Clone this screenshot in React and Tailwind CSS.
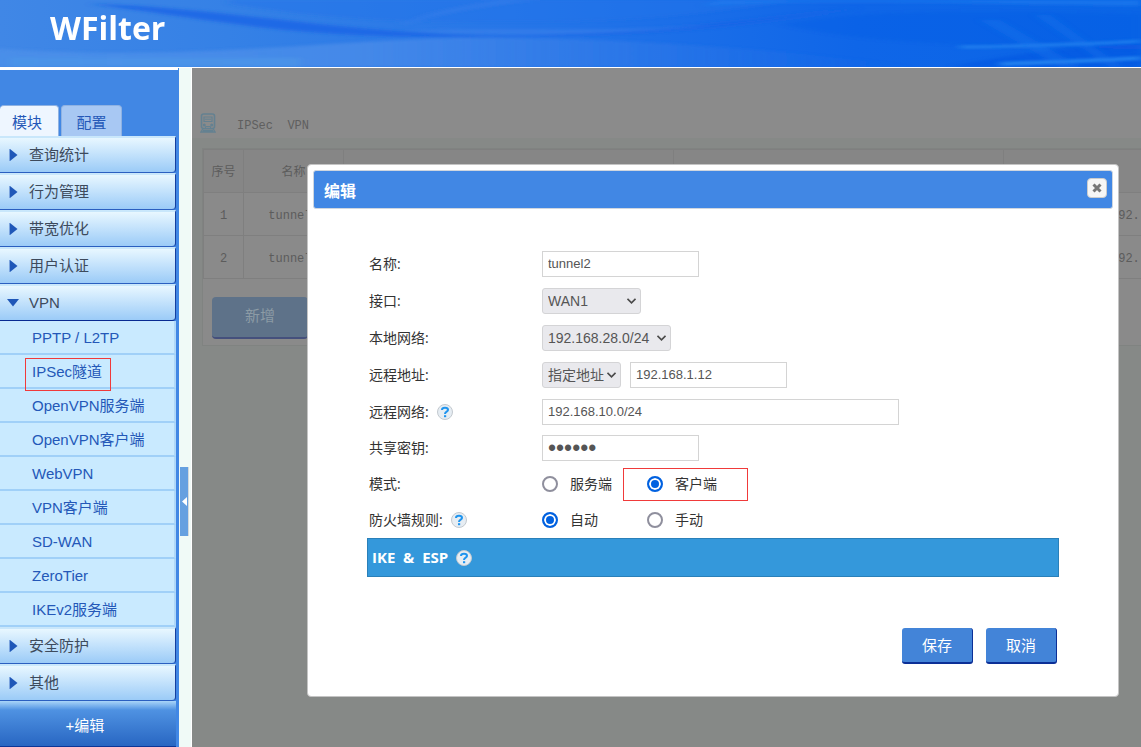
import React, { useState } from "react";

const SANS = "font-['Open_Sans','Noto_Sans_CJK_SC',sans-serif]";
const ARIAL = "font-['Liberation_Sans','Noto_Sans_CJK_SC',sans-serif]";
const MONO = "font-['Liberation_Mono','Noto_Sans_CJK_SC',monospace]";

const VPN_LINKS = [
  "PPTP / L2TP",
  "IPSec隧道",
  "OpenVPN服务端",
  "OpenVPN客户端",
  "WebVPN",
  "VPN客户端",
  "SD-WAN",
  "ZeroTier",
  "IKEv2服务端",
];

const SECTIONS = ["查询统计", "行为管理", "带宽优化", "用户认证", "VPN", "安全防护", "其他"];

function HeaderArt() {
  return (
    <svg className="absolute inset-0 h-full w-full" viewBox="0 0 1141 67" preserveAspectRatio="none" aria-hidden="true">
      <defs>
        <linearGradient id="sky" x1="0" y1="0" x2="1" y2="0">
          <stop offset="0" stopColor="#4087e6" />
          <stop offset="0.2" stopColor="#3581e6" />
          <stop offset="0.45" stopColor="#2676e8" />
          <stop offset="0.75" stopColor="#0f66e8" />
          <stop offset="1" stopColor="#0a65e6" />
        </linearGradient>
        <linearGradient id="floor" x1="0" y1="0" x2="1" y2="0">
          <stop offset="0" stopColor="#4b8fe9" stopOpacity="0.9" />
          <stop offset="0.4" stopColor="#4a8ce9" stopOpacity="0.8" />
          <stop offset="1" stopColor="#2a70e6" stopOpacity="0" />
        </linearGradient>
        <filter id="soft" x="-5%" y="-30%" width="110%" height="160%">
          <feGaussianBlur stdDeviation="4 1.5" />
        </filter>
      </defs>
      <rect width="1141" height="67" fill="url(#sky)" />
      <g filter="url(#soft)">
        <path d="M-10 67V48C150 60 280 46 400 40S700 40 920 67Z" fill="url(#floor)" />
        <path d="M10 58H300V67H10Z" fill="#4c97e8" opacity=".6" />
        <path d="M90 4C200 6 300 26 440 34S720 22 860 8C720 32 600 38 440 37S230 22 90 4Z" fill="#1664e6" opacity=".8" />
        <path d="M230 4C330 20 400 22 520 22S700 14 800 0H230Z" fill="#1f73ea" opacity=".5" />
        <path d="M400 26C440 12 500 4 540 0H500C450 8 420 14 400 26Z" fill="#4184ea" opacity=".4" />
        <path d="M400 31C500 26 600 34 720 24C620 36 500 36 400 31Z" fill="#3f84ec" opacity=".5" />
        <path d="M700 6C800 0 900 2 1141 6V0H720Z" fill="#1d7bee" opacity=".7" />
        <path d="M780 24C860 10 960 10 1141 14V50C1000 44 880 48 780 24Z" fill="#085ae4" opacity=".3" />
        <path d="M950 67C1020 52 1080 46 1141 44V67Z" fill="#0b54e2" opacity=".5" />
      </g>
      <g filter="url(#soft)">
        <path d="M960 47C1040 46 1090 44 1141 41" stroke="#2a8cf2" strokeWidth="2" fill="none" />
        <path d="M1000 64C1050 62 1090 61 1141 58" stroke="#2a8cf2" strokeWidth="3" fill="none" />
        <path d="M980 20L1060 67H1080L1000 20ZM1035 15L1110 67H1122L1050 15Z" fill="#2079ee" opacity=".35" />
      </g>
    </svg>
  );
}

function Arrow({ open }) {
  return (
    <svg className="h-3 w-3 shrink-0" viewBox="0 0 12 12" aria-hidden="true">
      {open ? <path d="M0 2H12L6 9.5Z" fill="#1f57b8" /> : <path d="M3 0L10.5 6L3 12Z" fill="#1f57b8" />}
      {!open && <path d="M2.5 0V12" stroke="#7ba4de" />}
    </svg>
  );
}

function Section({ title, open, onClick }) {
  return (
    <button
      type="button"
      onClick={onClick}
      aria-expanded={open}
      className={`flex h-[37px] w-full items-center gap-[10px] rounded-br-sm border-t-2 border-r border-b border-t-[#c9e7fb] border-r-[#153f9f] bg-linear-to-b from-[#e8f7ff] to-[#9bcbf7] pl-[7px] text-left text-[15px] text-[#3d4a5c] ${open ? "border-b-[#072a92]" : "border-b-[#2a5fc0]"}`}
    >
      <Arrow open={open} />
      <span>{title}</span>
    </button>
  );
}

function Sidebar() {
  const [open, setOpen] = useState("VPN");
  return (
    <aside className={`flex w-[179px] shrink-0 flex-col bg-[#4187e4] ${ARIAL}`}>
      <div className="mr-px h-0.5 bg-white" />
      <div className="mt-[35px] flex h-[31px] gap-0.5 text-[15px] text-[#2458b8]" role="tablist">
        <button type="button" role="tab" aria-selected="true" className="w-[59px] rounded-t border-t border-r border-[#8fb2e2] bg-[#eef6ff] pr-1 pt-1">
          模块
        </button>
        <button type="button" role="tab" aria-selected="false" className="w-[61px] rounded-t border-x border-t border-[#8fb2e2] bg-[#a8c8f3] pt-1">
          配置
        </button>
      </div>
      <nav className="mr-[3px] flex flex-1 flex-col">
        {SECTIONS.map((s) => (
          <React.Fragment key={s}>
            <Section title={s} open={open === s} onClick={() => setOpen(open === s ? "" : s)} />
            {s === "VPN" && open === s && (
              <ul>
                {VPN_LINKS.map((l) => (
                  <li key={l}>
                    <a href="#" className="relative flex h-[34px] items-center border-r-2 border-b-2 border-r-[#b0d8f8] border-b-[#a0d0f8] bg-[#c9eaff] pt-0.5 pl-8 text-[15px] text-[#2458b8]">
                      {l}
                      {l === "IPSec隧道" && <span className="absolute top-[3px] left-[25px] z-10 h-[33px] w-[86px] border border-[#f03a3a]" />}
                    </a>
                  </li>
                ))}
              </ul>
            )}
          </React.Fragment>
        ))}
        <button type="button" className="h-[46px] w-full border-b border-[#0c3597] bg-linear-to-b from-[#a9d5f8] via-[#4f92e2] via-20% to-[#2866c2] pr-1.5 pt-1.5 text-[15px] text-white">
          +编辑
        </button>
      </nav>
    </aside>
  );
}

function Splitter() {
  return (
    <div className="-mt-px w-[13px] shrink-0 border-r border-white bg-[#f0faf7] pt-[400px] pl-px">
      <button type="button" aria-label="收起" className="flex h-[69px] w-[9px] items-center justify-center border-r border-[#d3d8dc] bg-[#65a0e0]">
        <svg className="h-[9px] w-[5px]" viewBox="0 0 5 9" aria-hidden="true">
          <path d="M5 0V9L0 4.5Z" fill="#fff" />
        </svg>
      </button>
    </div>
  );
}

function TrainIcon() {
  return (
    <svg className="h-5 w-4" viewBox="0 0 16 20" fill="none" stroke="#648191" aria-hidden="true">
      <rect x="1.5" y="1" width="13" height="14.500" rx="2" strokeWidth="1.600" />
      <path d="M4 4H12V8.500H4Z" strokeWidth="1.200" />
      <path d="M5 6.200H11" />
      <path d="M5.500 15.500V13.500H10.500V15.500" />
      <circle cx="4.300" cy="12" r=".8" strokeWidth="1.400" />
      <circle cx="11.700" cy="12" r=".8" strokeWidth="1.400" />
      <path d="M3 15.500L1 19H15L13 15.500M3 17.500H13" strokeWidth="1.400" />
    </svg>
  );
}

function TunnelTable() {
  const cell = "h-[43px] border border-[#7f7f7f] p-0 pt-[3px] text-center font-normal";
  return (
    <div className="mt-[10px] ml-[10px] h-[198px] w-[1280px] border border-[#808381] bg-[#8a8a8a]">
      <table className="w-full table-fixed border-collapse text-[12px] text-[#5c5c5c]">
        <colgroup>
          <col className="w-10" />
          <col className="w-[100px]" />
          <col className="w-[330px]" />
          <col className="w-[330px]" />
          <col />
        </colgroup>
        <thead>
          <tr className="bg-[#868686]">
            <th className={cell}>序号</th>
            <th className={cell}>名称</th>
            <th className={cell} />
            <th className={cell} />
            <th className={cell} />
          </tr>
        </thead>
        <tbody>
          {["tunnel1", "tunnel2"].map((t, i) => (
            <tr key={t}>
              <td className={cell}>{i + 1}</td>
              <td className={cell}>{t}</td>
              <td className={cell} />
              <td className={cell} />
              <td className="h-[43px] border border-[#7f7f7f] p-0 pt-[3px] pl-[107px] text-left">192.</td>
            </tr>
          ))}
        </tbody>
      </table>
      <button type="button" className="mt-[18px] ml-[9px] h-[42px] w-24 rounded border-b-2 border-[#45507c] bg-[#5e7289] pt-0.5 text-[15px] text-[#8c9ba5]">
        新增
      </button>
    </div>
  );
}

function Help() {
  return (
    <button type="button" aria-label="帮助" className="flex h-4 w-4 items-center justify-center rounded-full border border-[#c3c9cf] bg-[#e6edf3]">
      <svg className="h-3 w-3 shrink-0" viewBox="0 0 12 12" fill="none" stroke="#1f94ee" aria-hidden="true">
        <path d="M3 4C3 1 9 1 9 4C9 5.800 6 5.600 6 8" strokeWidth="2" />
        <path d="M5 10.200H7.200" strokeWidth="2" />
      </svg>
    </button>
  );
}

function Row({ id, label, help, short, children }) {
  return (
    <div className={`flex items-center ${short ? "h-9" : "h-[37px]"}`}>
      <div className="flex w-[175px] shrink-0 items-center gap-2 pl-0.5">
        <label htmlFor={id}>{label}</label>
        {help && <Help />}
      </div>
      {children}
    </div>
  );
}

function Select({ id, label, value, width }) {
  return (
    <span className={`relative ${width}`}>
      <select id={id} aria-label={label} className={`block h-[26px] w-full appearance-none rounded-[3px] border border-[#d4d4d6] bg-[#e9e9ed] pl-[5px] text-sm text-[#555] ${ARIAL}`}>
        <option>{value}</option>
      </select>
      <svg className="pointer-events-none absolute top-[10px] right-[5px] h-[6px] w-[9px]" viewBox="0 0 9 6" fill="none" aria-hidden="true">
        <path d="M.5 .800L4.500 4.800L8.500 .800" stroke="#4a4a4a" strokeWidth="1.600" />
      </svg>
    </span>
  );
}

function Field({ id, label, value, width, type = "text" }) {
  return (
    <input
      id={id}
      aria-label={label}
      type={type}
      defaultValue={value}
      className={`h-[26px] min-w-0 border border-[#d4d4d4] bg-white px-[5px] text-[#555] ${type === "password" ? "text-[23px]" : "text-[13px]"} ${ARIAL} ${width}`}
    />
  );
}

function Radio({ name, text, checked, className }) {
  return (
    <label className={`flex items-center gap-3 ${className}`}>
      <input
        type="radio"
        name={name}
        defaultChecked={checked}
        className="h-4 w-4 shrink-0 appearance-none rounded-full border-2 border-[#8f8f9d] bg-white checked:border-[#0061e0] checked:bg-[#0061e0] checked:shadow-[inset_0_0_0_2px_#fff]"
      />
      {text}
    </label>
  );
}

function EditDialog() {
  const action = "h-9 w-[71px] rounded-[3px] border-r border-b-2 border-[#0b2f96] bg-[#4384d8] pt-0.5 text-[15px] text-white";
  return (
    <section role="dialog" aria-labelledby="dlg-title" className={`w-full rounded-sm border border-[#c4c4c4] bg-white p-[5px] text-sm text-[#333] ${SANS}`}>
      <header className="flex h-[39px] items-center justify-between rounded-[3px] border border-[#cfd6df] bg-[#4187e4] pr-[5px] pl-[10px]">
        <h2 id="dlg-title" className="pt-0.5 text-base font-bold text-white">编辑</h2>
        <button type="button" aria-label="关闭" className="mb-[3px] flex h-5 w-5 items-center justify-center rounded-sm border border-[#ccc] bg-[#f6f6f6]">
          <svg className="h-[10px] w-[10px]" viewBox="0 0 10 10" aria-hidden="true">
            <path d="M1.500 1.500L8.500 8.500M8.500 1.500L1.500 8.500" stroke="#777" strokeWidth="3" />
          </svg>
        </button>
      </header>
      <form className="px-[54px] pt-9 pb-[27px]" onSubmit={(e) => e.preventDefault()}>
        <Row id="name" label="名称:"><Field id="name" value="tunnel2" width="w-[157px]" /></Row>
        <Row id="iface" label="接口:"><Select id="iface" value="WAN1" width="w-[99px]" /></Row>
        <Row id="local" label="本地网络:"><Select id="local" value="192.168.28.0/24" width="w-[129px]" /></Row>
        <Row id="raddr" label="远程地址:">
          <div className="flex gap-[9px]">
            <Select label="地址类型" value="指定地址" width="w-[79px]" />
            <Field id="raddr" value="192.168.1.12" width="w-[157px]" />
          </div>
        </Row>
        <Row id="rnet" label="远程网络:" help><Field id="rnet" value="192.168.10.0/24" width="w-[357px]" /></Row>
        <Row id="psk" label="共享密钥:" short><Field id="psk" type="password" value="secret" width="w-[157px]" /></Row>
        <Row label="模式:" short>
          <Radio name="mode" text="服务端" className="w-[81px] whitespace-nowrap" />
          <Radio name="mode" text="客户端" checked className="h-[33px] w-[125px] border border-[#f03a3a] pl-[23px]" />
        </Row>
        <Row label="防火墙规则:" help short>
          <Radio name="fw" text="自动" checked className="w-[81px]" />
          <Radio name="fw" text="手动" className="w-[125px] pl-6" />
        </Row>
        <div className="flex h-[39px] items-center gap-2 border border-[#2a80b9] bg-[#3498db] pl-1 text-[15px] font-bold text-white">
          <span className="whitespace-pre">{"IKE  &  ESP"}</span>
          <Help />
        </div>
        <div className="mt-[51px] mr-0.5 flex justify-end gap-[13px]">
          <button type="submit" className={action}>保存</button>
          <button type="button" className={action}>取消</button>
        </div>
      </form>
    </section>
  );
}

export default function App() {
  return (
    <div className="flex min-h-screen flex-col overflow-hidden">
      <header className="relative flex h-[68px] items-start border-b border-white bg-[#3a82e6]">
        <HeaderArt />
        <h1 className="relative pt-1 pl-[50px] font-['Open_Sans',sans-serif] text-[32px] leading-[48px] font-bold text-white">WFilter</h1>
      </header>
      <div className="flex flex-1">
        <Sidebar />
        <Splitter />
        <main className="relative min-w-0 flex-1 overflow-hidden bg-[#868987]">
          <div className={MONO}>
            <div className="flex h-[70px] items-end gap-[21px] bg-[#8b8b8b] pb-[5px] pl-2 text-[12px] text-[#5f5f5f]">
              <TrainIcon />
              <h2 className="whitespace-pre leading-[14px]">{"IPSec  VPN"}</h2>
            </div>
            <TunnelTable />
          </div>
          <div className="absolute inset-0 pt-24 pr-[22px] pl-[115px]">
            <EditDialog />
          </div>
        </main>
      </div>
    </div>
  );
}
